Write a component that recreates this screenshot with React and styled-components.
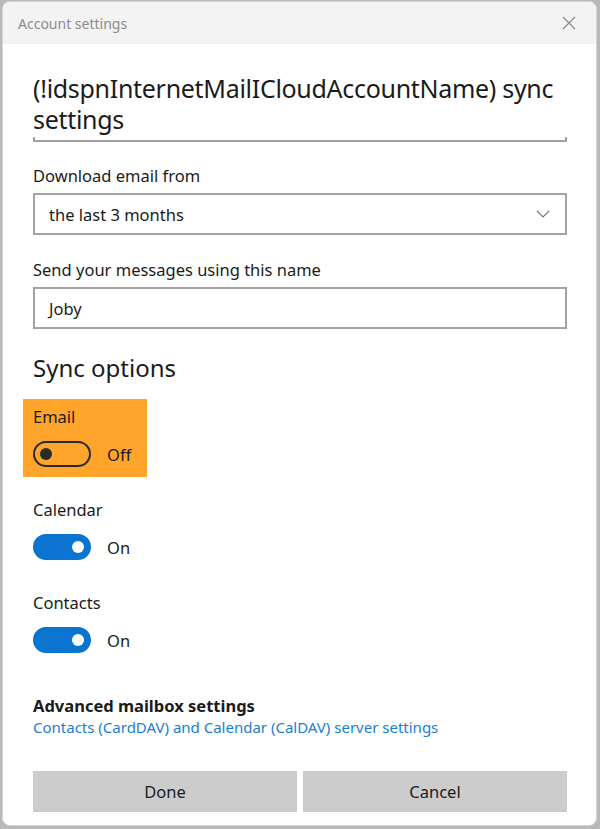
import React from "react";
import styled, { createGlobalStyle } from "styled-components";

const GlobalStyle = createGlobalStyle`
  html, body {
    margin: 0;
    padding: 0;
    background: #b9b9b9;
    font-family: "Noto Sans", "Open Sans", sans-serif;
  }
`;

const Window = styled.div`
  margin: 1px 3px 0 2px;
  height: 825px;
  background: #ffffff;
  border: 1px solid #d6d6d6;
  border-radius: 8px;
  overflow: hidden;
  box-sizing: border-box;
  display: flex;
  flex-direction: column;
`;

const TitleBar = styled.div`
  height: 42px;
  flex: none;
  background: #f3f3f3;
  display: flex;
  align-items: center;
  justify-content: space-between;
  padding: 0 19px 0 15px;
  color: #8c8c8c;
  font-size: 14px;
`;

const CloseButton = styled.button`
  border: none;
  background: none;
  padding: 0;
  width: 16px;
  height: 16px;
  display: flex;
  align-items: center;
  justify-content: center;
  cursor: pointer;
`;

const Body = styled.div`
  flex: 1;
  padding: 29px 29px 0 30px;
  display: flex;
  flex-direction: column;
  color: #1b1b1b;
`;

const Heading = styled.h1`
  margin: 0;
  font-size: 25px;
  font-weight: 400;
  line-height: 31px;
  letter-spacing: -0.3px;
`;

const HeadingEdge = styled.div`
  height: 3px;
  margin-top: 2px;
  border: 2px solid #a0a0a0;
  border-top: none;
`;

const Label = styled.div`
  font-size: 16.5px;
  line-height: 22px;
  margin-top: ${(p) => p.$top || 0}px;
`;

const Field = styled.div`
  margin-top: 6px;
  height: 42px;
  box-sizing: border-box;
  border: 2px solid #a3a3a3;
  display: flex;
  align-items: center;
  justify-content: space-between;
  padding: 0 15px 0 14px;
  font-size: 16.5px;
`;

const SectionTitle = styled.h2`
  margin: 23px 0 0;
  font-size: 24px;
  font-weight: 400;
  line-height: 32px;
`;

const SyncList = styled.div`
  margin-top: 15px;
  display: flex;
  flex-direction: column;
  align-items: flex-start;
  gap: 15px;
`;

const SyncItem = styled.div`
  margin-left: -10px;
  padding: 7px 16px 10px 10px;
  background: ${(p) => (p.$highlight ? "#ffa52b" : "transparent")};
  display: flex;
  flex-direction: column;
  gap: 13px;
`;

const ToggleRow = styled.div`
  display: flex;
  align-items: center;
  gap: 16px;
  font-size: 16.5px;
`;

const Track = styled.div`
  width: 58px;
  height: 26px;
  box-sizing: border-box;
  border-radius: 13px;
  border: 2px solid ${(p) => (p.$on ? "#0a74d0" : "#2a2a2a")};
  background: ${(p) => (p.$on ? "#0a74d0" : "transparent")};
  display: flex;
  align-items: center;
  justify-content: ${(p) => (p.$on ? "flex-end" : "flex-start")};
  padding: 0 5px;
`;

const Knob = styled.div`
  width: 12px;
  height: 12px;
  border-radius: 50%;
  background: ${(p) => (p.$on ? "#ffffff" : "#2a2a2a")};
`;

const Advanced = styled.div`
  margin-top: 32px;
  font-size: 16.5px;
  font-weight: 700;
  line-height: 22px;
`;

const Link = styled.a`
  font-size: 15px;
  line-height: 20px;
  color: #1a7fd4;
  text-decoration: none;
`;

const Buttons = styled.div`
  margin-top: 34px;
  display: grid;
  grid-template-columns: 1fr 1fr;
  gap: 6px;
`;

const Button = styled.button`
  height: 41px;
  border: none;
  background: #cccccc;
  color: #1b1b1b;
  font-family: inherit;
  font-size: 16.5px;
`;

function Toggle({ on }) {
  return (
    <ToggleRow>
      <Track $on={on}>
        <Knob $on={on} />
      </Track>
      {on ? "On" : "Off"}
    </ToggleRow>
  );
}

export default function App() {
  return (
    <>
      <GlobalStyle />
      <Window>
        <TitleBar>
          Account settings
          <CloseButton aria-label="Close">
            <svg width="14" height="14" viewBox="0 0 14 14">
              <path d="M1 1 L13 13 M13 1 L1 13" stroke="#8a8a8a" strokeWidth="1.2" fill="none" />
            </svg>
          </CloseButton>
        </TitleBar>
        <Body>
          <Heading>(!idspnInternetMailICloudAccountName) sync settings</Heading>
          <HeadingEdge />
          <Label $top={23}>Download email from</Label>
          <Field>
            the last 3 months
            <svg width="14" height="8" viewBox="0 0 14 8">
              <path d="M1 1 L7 7 L13 1" stroke="#7a7a7a" strokeWidth="1.2" fill="none" />
            </svg>
          </Field>
          <Label $top={24}>Send your messages using this name</Label>
          <Field>Joby</Field>
          <SectionTitle>Sync options</SectionTitle>
          <SyncList>
            <SyncItem $highlight>
              <Label>Email</Label>
              <Toggle on={false} />
            </SyncItem>
            <SyncItem>
              <Label>Calendar</Label>
              <Toggle on />
            </SyncItem>
            <SyncItem>
              <Label>Contacts</Label>
              <Toggle on />
            </SyncItem>
          </SyncList>
          <Advanced>Advanced mailbox settings</Advanced>
          <Link href="#">Contacts (CardDAV) and Calendar (CalDAV) server settings</Link>
          <Buttons>
            <Button>Done</Button>
            <Button>Cancel</Button>
          </Buttons>
        </Body>
      </Window>
    </>
  );
}
